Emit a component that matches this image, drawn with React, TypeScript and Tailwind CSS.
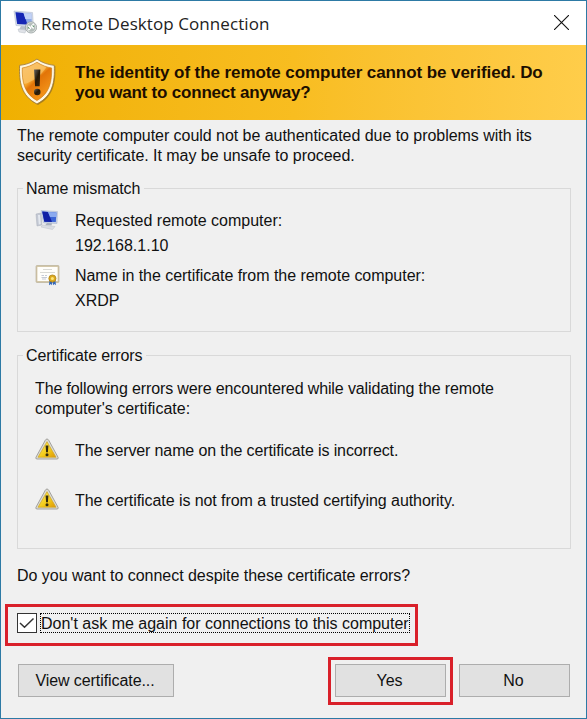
import type { ReactNode } from 'react';

function ComputerIcon({ badge = false }: { badge?: boolean }) {
  return badge ? (
    <svg width="24" height="26" viewBox="0 0 24 26" className="block">
      <path d="M1 1 L19.5 2.5 L20.5 17 L3 15.5 Z" fill="#d5dcea" stroke="#b4bdd0" strokeWidth="0.6" />
      <path d="M2.5 2.3 L18.3 3.6 L19 14.8 L4.2 14 Z" fill="#8ea9e6" />
      <path d="M2.5 2.3 L10.5 3 L14.5 14.6 L4.2 14 Z" fill="#1626b4" />
      <path d="M10.5 3 L18.3 3.6 L18.7 9 L12.4 9 Z" fill="#c2d2f6" />
      <path d="M8 16 L14 16.5 L13 20 L6 19.5 Z" fill="#b9c0cb" />
      <path d="M5 19 L13 20 L12 23 L6 22 Z" fill="#e0e3e8" stroke="#b9bec6" strokeWidth="0.5" />
      <circle cx="18" cy="17.4" r="5.6" fill="#dde1e0" stroke="#969e9d" strokeWidth="0.8" />
      <circle cx="18" cy="17.4" r="4.3" fill="#b3bcb9" />
      <path d="M15.3 15.8 L17.6 18 L15.3 20.2 M20.7 14 L18.5 16.3 L20.7 18.6" fill="none" stroke="#fff" strokeWidth="1.5" />
      <path d="M15 17.2 L16.6 18.6 M19.6 15.4 L20.8 17" stroke="#4d9a5c" strokeWidth="0.8" />
    </svg>
  ) : (
    <svg width="24" height="22" viewBox="0 0 24 22" className="block">
      <path d="M1 5 L6 4 L7 16 L2 17 Z" fill="#c3c8d3" stroke="#a9afbb" strokeWidth="0.5" />
      <path d="M3 6 L5 6 L5.7 15 L3.8 15.5 Z" fill="#e4e8ef" />
      <path d="M6 1.5 L22.5 2.5 L22 14.5 L8.5 14 Z" fill="#c6d0e4" stroke="#a6b3cd" strokeWidth="0.5" />
      <path d="M7.2 2.5 L21.5 3.4 L20.8 13 L9.3 12.8 Z" fill="#3b64d6" />
      <path d="M7.2 2.5 L13 2.9 L17 13 L9.3 12.8 Z" fill="#101fa5" />
      <path d="M13 2.9 L21.5 3.4 L21.2 8 L15 8 Z" fill="#8baaf0" />
      <path d="M12 14 L17 14.2 L16.5 16.5 L10 16.3 Z" fill="#a9b1bd" />
      <path d="M8 16 L20 17.5 L17.5 20.5 L6 18 Z" fill="#dadde3" stroke="#bcc1c9" strokeWidth="0.5" />
    </svg>
  );
}

function ShieldIcon() {
  return (
    <svg width="42" height="49" viewBox="0 0 40 47" preserveAspectRatio="none" className="block">
      <defs>
        <linearGradient id="shield" x1="0" y1="0" x2="0.7" y2="1">
          <stop offset="0" stopColor="#f5b357" />
          <stop offset="0.45" stopColor="#f7a62b" />
          <stop offset="0.55" stopColor="#e27408" />
          <stop offset="1" stopColor="#f79a1c" />
        </linearGradient>
        <linearGradient id="mark" x1="0" y1="0" x2="1" y2="1">
          <stop offset="0" stopColor="#666" />
          <stop offset="0.5" stopColor="#251705" />
          <stop offset="1" stopColor="#3b2814" />
        </linearGradient>
      </defs>
      <path d="M20 3 C15 6.5 9 8.2 3.5 8.7 C2.8 24 5 38.5 20 46 C35 38.5 37.2 24 36.5 8.7 C31 8.2 25 6.5 20 3Z" fill="#8b691f" opacity="0.65" />
      <path d="M19 2 C14 5.6 8 7.5 2.5 8 C1.8 24 4 37.5 19 45 C34 37.5 36.2 24 35.5 8 C30 7.5 24 5.6 19 2Z" fill="#fff7e2" stroke="#9b7835" strokeWidth="0.8" />
      <path d="M19 5 C14.5 8 9.5 9.8 5 10.5 C4.7 23.5 6.8 35 19 41.8 C31.2 35 33.3 23.5 33 10.5 C28.5 9.8 23.5 8 19 5Z" fill="url(#shield)" stroke="#c97c17" strokeWidth="0.6" />
      <path d="M19 5.6 C14.5 8.6 9.5 10.3 5.5 11 C5.3 17 5.7 22 7 26 C14 24 23 18 28 9.8 C24.5 9 22 7.5 19 5.6Z" fill="#ffe2a1" opacity="0.4" />
      <path d="M16.2 12 L22.2 12 L21.6 28 L17.2 28 Z" fill="url(#mark)" />
      <circle cx="19.3" cy="33.5" r="3.1" fill="url(#mark)" />
    </svg>
  );
}

function CertificateIcon() {
  return (
    <svg width="26" height="22" viewBox="0 0 26 22" className="block">
      <rect x="1" y="1.5" width="23" height="17" rx="1" fill="#d3c7a8" stroke="#b4aa91" strokeWidth="0.6" />
      <rect x="2.4" y="3" width="20.2" height="14" fill="#fffefa" />
      <path d="M8 5.5 H17 M5 8.5 H20" stroke="#d0d0ca" strokeWidth="0.8" />
      <path d="M6.5 11.5 H9 M10 11.5 H12 M6.5 13.5 H12 M7 15 H11" stroke="#b8becb" strokeWidth="0.8" />
      <path d="M14.6 15 L14 21.2 L15.8 20 L17 21.2 L17.5 16 L18.1 21.2 L19.4 20 L21 21.2 L20.2 15Z" fill="#3467b9" />
      <circle cx="17.4" cy="14.5" r="3.6" fill="#dba91e" stroke="#a77d13" strokeWidth="0.7" />
      <circle cx="17.4" cy="14.5" r="1.5" fill="#ffe678" />
    </svg>
  );
}

function WarningIcon() {
  return (
    <svg width="24" height="22" viewBox="0 0 24 22" className="block">
      <defs>
        <linearGradient id="warn" x1="0" y1="0" x2="1" y2="1">
          <stop offset="0" stopColor="#fff16b" />
          <stop offset="0.6" stopColor="#f2c816" />
          <stop offset="1" stopColor="#dc960a" />
        </linearGradient>
      </defs>
      <path d="M12 1 Q13 1 13.7 2.2 L23 19.2 Q23.7 21 22 21 L2 21 Q0.3 21 1 19.2 L10.3 2.2 Q11 1 12 1Z" fill="#dddcd5" stroke="#9b9a95" strokeWidth="0.9" />
      <path d="M12 3.7 L21 19.2 H3 Z" fill="url(#warn)" stroke="#cda426" strokeWidth="0.7" />
      <path d="M10.6 7.5 H13.4 L12.9 14.2 H11.1 Z" fill="#302a10" />
      <circle cx="12" cy="16.7" r="1.5" fill="#302a10" />
    </svg>
  );
}

function Group({ title, children, className }: { title: string; children: ReactNode; className: string }) {
  return (
    <section className={`w-[554px] border border-[#d9d9d9] ${className}`}>
      <h2 className="-mt-[10px] ml-[5px] w-fit bg-[#f0f0f0] pl-[3px] pr-1 leading-5 tracking-[-0.1px]">{title}</h2>
      {children}
    </section>
  );
}

export default function App() {
  return (
    <main className="flex h-[719px] w-[587px] flex-col overflow-hidden whitespace-nowrap border border-[#2d7aa5] bg-[#f0f0f0] font-['Liberation_Sans',Arial,sans-serif] text-base leading-5 text-[#111]">
      <header className="flex h-11 shrink-0 items-center bg-white pl-3 pr-[17px]">
        <ComputerIcon badge />
        <h1 className="ml-1 mt-px flex-1 font-['Open_Sans',sans-serif] text-[17px] tracking-[0.08px] text-[#222]">Remote Desktop Connection</h1>
        <button aria-label="Close" className="mb-px">
          <svg width="15" height="15" viewBox="0 0 15 15" className="block">
            <path d="M0 0 L15 15 M15 0 L0 15" stroke="#111" strokeWidth="1.1" />
          </svg>
        </button>
      </header>
      <div className="flex h-[75px] shrink-0 bg-linear-to-r from-[#f0b000] via-[#f8bd20] to-[#ffcd4a] pl-4 pt-3">
        <ShieldIcon />
        <p className="ml-4 mt-[6px] text-[17px] font-bold leading-5 tracking-[-0.08px] text-[#1c0e00]">
          The identity of the remote computer cannot be verified. Do<br />
          <span className="tracking-[-0.2px]">you want to connect anyway?</span>
        </p>
      </div>
      <div className="pl-4 pt-[6px]">
        <p className="tracking-[-0.04px]">The remote computer could not be authenticated due to problems with its<br />security certificate. It may be unsafe to proceed.</p>
        <Group title="Name mismatch" className="mt-[22px] h-36">
          <div className="mt-[9px] flex pl-[17px]">
            <div className="w-10 pt-px"><ComputerIcon /></div>
            <p className="leading-[25px]">Requested remote computer:<br />192.168.1.10</p>
          </div>
          <div className="mt-[5px] flex pl-[17px]">
            <div className="w-10 pt-px"><CertificateIcon /></div>
            <p className="leading-[25px] tracking-[-0.04px]">Name in the certificate from the remote computer:<br />XRDP</p>
          </div>
        </Group>
        <Group title="Certificate errors" className="mt-[23px] h-[194px]">
          <p className="ml-[17px] mt-[13px] tracking-[-0.125px]">The following errors were encountered while validating the remote<br /><span className="tracking-normal">computer's certificate:</span></p>
          <div className="mt-[18px] flex items-center pl-[17px]">
            <div className="w-10"><WarningIcon /></div>
            <p className="mt-1 tracking-[-0.12px]">The server name on the certificate is incorrect.</p>
          </div>
          <div className="mt-[26px] flex items-center pl-[17px]">
            <div className="w-10"><WarningIcon /></div>
            <p className="mt-1 tracking-[-0.065px]">The certificate is not from a trusted certifying authority.</p>
          </div>
        </Group>
        <p className="mt-[17px] tracking-[-0.03px]">Do you want to connect despite these certificate errors?</p>
      </div>
      <div className="ml-1 mt-[18px] flex h-[42px] w-[413px] shrink-0 border-3 border-[#d9202a] pl-[9px] pt-[6px]">
        <div className="flex size-5 shrink-0 items-center justify-center border border-[#333] bg-white">
          <svg width="16" height="16" viewBox="0 0 16 16"><path d="M1 8 L5.5 12.3 L14.5 3.5" fill="none" stroke="#333" strokeWidth="1.5" /></svg>
        </div>
        <span className="ml-[3px] h-5 w-[370px] border border-dotted border-black leading-[19px]">Don't ask me again for connections to this computer</span>
      </div>
      <footer className="mt-[11px] flex items-start pl-[17px]">
        <button className="mt-[7px] h-[33px] w-[156px] border border-[#adadad] bg-[#e1e1e1] pr-[2px] tracking-[-0.08px]">View certificate...</button>
        <div className="ml-[154px] h-12 w-[125px] border-3 border-[#d9202a] p-1">
          <button className="h-[33px] w-[111px] border border-[#adadad] bg-[#e1e1e1] pr-0.5">Yes</button>
        </div>
        <button className="ml-[6px] mt-[7px] h-[33px] w-[111px] border border-[#adadad] bg-[#e1e1e1] pr-0.5">No</button>
      </footer>
    </main>
  );
}
